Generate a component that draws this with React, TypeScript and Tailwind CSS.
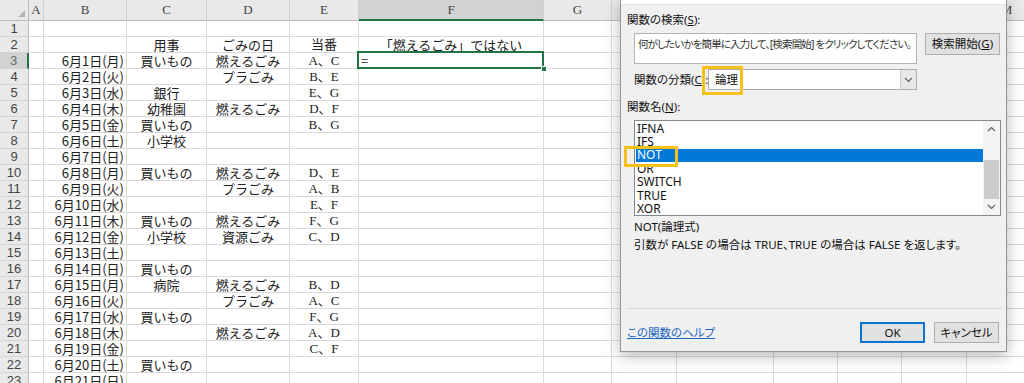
import React from 'react';

type Col = { key: string; w: string };

const COLS: Col[] = [
  { key: 'A', w: 'w-[15px]' },
  { key: 'B', w: 'w-[83px]' },
  { key: 'C', w: 'w-[80px]' },
  { key: 'D', w: 'w-[83px]' },
  { key: 'E', w: 'w-[69px]' },
  { key: 'F', w: 'w-[185px]' },
  { key: 'G', w: 'w-[68px]' },
  { key: 'H', w: 'w-[65px]' },
  { key: 'I', w: 'w-[97px]' },
  { key: 'J', w: 'w-[64px]' },
  { key: 'K', w: 'w-[64px]' },
  { key: 'L', w: 'w-[65px]' },
  { key: 'M', w: 'w-[80px]' },
];

// rows 3.. : B, C, D, E
const SCHEDULE: [string, string, string, string][] = [
  ['6月1日(月)', '買いもの', '燃えるごみ', 'A、C'],
  ['6月2日(火)', '', 'プラごみ', 'B、E'],
  ['6月3日(水)', '銀行', '', 'E、G'],
  ['6月4日(木)', '幼稚園', '燃えるごみ', 'D、F'],
  ['6月5日(金)', '買いもの', '', 'B、G'],
  ['6月6日(土)', '小学校', '', ''],
  ['6月7日(日)', '', '', ''],
  ['6月8日(月)', '買いもの', '燃えるごみ', 'D、E'],
  ['6月9日(火)', '', 'プラごみ', 'A、B'],
  ['6月10日(水)', '', '', 'E、F'],
  ['6月11日(木)', '買いもの', '燃えるごみ', 'F、G'],
  ['6月12日(金)', '小学校', '資源ごみ', 'C、D'],
  ['6月13日(土)', '', '', ''],
  ['6月14日(日)', '買いもの', '', ''],
  ['6月15日(月)', '病院', '燃えるごみ', 'B、D'],
  ['6月16日(火)', '', 'プラごみ', 'A、C'],
  ['6月17日(水)', '買いもの', '', 'F、G'],
  ['6月18日(木)', '', '燃えるごみ', 'A、D'],
  ['6月19日(金)', '', '', 'C、F'],
  ['6月20日(土)', '買いもの', '', ''],
  ['6月21日(日)', '', '', ''],
];

const FUNCS = ['IFNA', 'IFS', 'NOT', 'OR', 'SWITCH', 'TRUE', 'XOR'];

const jp = "font-['Noto_Sans_CJK_JP',sans-serif]";
const ui = "font-['Noto_Sans','Noto_Sans_CJK_JP',sans-serif] [font-feature-settings:'palt']";

function rowCells(n: number): Record<string, React.ReactNode> {
  if (n === 2) return { C: '用事', D: 'ごみの日', E: '当番', F: '「燃えるごみ」ではない' };
  if (n >= 3) {
    const r = SCHEDULE[n - 3];
    const out: Record<string, React.ReactNode> = { B: r[0], C: r[1], D: r[2], E: r[3] };
    if (n === 3) out.F = '=';
    return out;
  }
  return {};
}

function HeaderRow() {
  return (
    <div className="flex h-[21px] shrink-0">
      <div className="relative w-[29px] shrink-0 border-b border-r border-[#bdbdbd] bg-[#e9e9e9]">
        <div className="absolute bottom-[3px] right-[3px] h-0 w-0 border-b-[7px] border-l-[7px] border-b-[#b5b5b5] border-l-transparent" />
      </div>
      {COLS.map((c) => {
        const active = c.key === 'F';
        return (
          <div
            key={c.key}
            className={`${c.w} shrink-0 flex items-center justify-center border-r border-[#d0d0d0] font-['Liberation_Serif',serif] text-[13px] text-[#444] ${
              active ? 'bg-[#d2d2d2] border-b-2 border-b-[#217346]' : 'bg-[#e9e9e9] border-b border-b-[#bdbdbd]'
            }`}
          >
            {c.key}
          </div>
        );
      })}
    </div>
  );
}

function SheetRow({ n }: { n: number }) {
  const cells = rowCells(n);
  const active = n === 3;
  return (
    <div className="flex h-[16px] shrink-0">
      <div
        className={`w-[29px] shrink-0 flex items-center justify-center border-b border-[#d5d5d5] font-['Liberation_Sans',sans-serif] text-[13px] leading-none ${
          active ? 'bg-[#d2d2d2] text-[#5b6f63] border-r-2 border-r-[#217346]' : 'bg-[#e9e9e9] text-[#444] border-r border-r-[#bdbdbd]'
        }`}
      >
        {n}
      </div>
      {COLS.map((c) => {
        const v = cells[c.key];
        const align =
          c.key === 'B' ? 'justify-end pr-[2px]' : c.key === 'F' && n === 3 ? 'justify-start pl-[2px]' : 'justify-center';
        const face = c.key === 'E' ? "font-['Liberation_Serif','Noto_Sans_CJK_JP',serif]" : jp;
        return (
          <div
            key={c.key}
            className={`${c.w} relative shrink-0 flex items-center whitespace-nowrap border-b border-r border-[#dadada] bg-white text-[13px] leading-none text-[#222] ${face} ${align}`}
          >
            {v}
            {c.key === 'F' && n === 3 && (
              <>
                <div className="absolute -left-[2px] -top-[2px] -right-[1px] -bottom-[1px] z-10 border-2 border-[#217346]" />
                <div className="absolute -right-[4px] -bottom-[4px] z-20 h-[6px] w-[6px] border border-white bg-[#217346]" />
              </>
            )}
          </div>
        );
      })}
    </div>
  );
}

function Chevron({ up }: { up?: boolean }) {
  return (
    <svg width="9" height="6" viewBox="0 0 9 6" className="block">
      <polyline
        points={up ? '1,5 4.5,1.5 8,5' : '1,1 4.5,4.5 8,1'}
        fill="none"
        stroke="#606060"
        strokeWidth="1.2"
      />
    </svg>
  );
}

function FunctionDialog() {
  return (
    <div
      className={`absolute left-[620px] top-0 z-30 h-[352px] w-[387px] border-x border-b border-[#959595] bg-[#f0f0f0] text-[11.5px] text-[#111] shadow-[0_4px_14px_rgba(0,0,0,0.28)] ${ui}`}
    >
      <div className="h-[5px] border-b border-[#e2e2e2] bg-white" />

      <div className="ml-[6px] mt-[8px] h-[14px] leading-[14px]">
        関数の検索(<span className="underline">S</span>):
      </div>

      <div className="mt-[6px] flex">
        <div className="ml-[13px] h-[31px] w-[283px] overflow-hidden border border-[#b4b4b4] bg-white px-[3px] pt-[2px] text-[10.5px] leading-[16px] tracking-[-0.85px] text-[#333] whitespace-nowrap">
          何がしたいかを簡単に入力して、[検索開始] をクリックしてください。
        </div>
        <div className="ml-[8px] flex h-[22px] w-[75px] items-center justify-center border border-[#adadad] bg-[#e1e1e1]">
          検索開始(<span className="underline">G</span>)
        </div>
      </div>

      <div className="mt-[5px] flex items-center">
        <div className="ml-[13px] w-[74px] whitespace-nowrap leading-[14px]">
          関数の分類(<span className="underline">C</span>):
        </div>
        <div className="flex h-[21px] w-[209px] items-stretch border border-[#acacac] bg-white">
          <div className="flex flex-1 items-center pl-[6px]">論理</div>
          <div className="flex w-[16px] items-center justify-center border-l border-[#cfcfcf] bg-[#e8e8e8]">
            <Chevron />
          </div>
        </div>
      </div>

      <div className="ml-[6px] mt-[10px] h-[14px] leading-[14px]">
        関数名(<span className="underline">N</span>):
      </div>

      <div className="ml-[13px] mt-[6px] flex h-[96px] w-[367px] border border-[#828790] bg-white">
        <div className="flex-1 pt-[1px]">
          {FUNCS.map((f) => (
            <div
              key={f}
              className={`ml-[1px] flex h-[13.4px] items-center pl-[1px] text-[12px] leading-none ${
                f === 'NOT' ? 'bg-[#0078d7] text-white' : 'text-[#111]'
              }`}
            >
              {f}
            </div>
          ))}
        </div>
        <div className="flex w-[17px] flex-col items-center bg-[#f3f3f3]">
          <div className="flex h-[17px] w-full items-center justify-center">
            <Chevron up />
          </div>
          <div className="mt-[22px] h-[40px] w-[15px] bg-[#cdcdcd]" />
          <div className="flex-1" />
          <div className="flex h-[16px] w-full items-center justify-center">
            <Chevron />
          </div>
        </div>
      </div>

      <div className="ml-[13px] mt-[4px] h-[14px] leading-[14px]">NOT(論理式)</div>
      <div className="ml-[13px] mt-[4px] h-[14px] whitespace-nowrap leading-[14px]">
        引数が FALSE の場合は TRUE、TRUE の場合は FALSE を返します。
      </div>

      <div className="ml-[6px] mt-[56px] w-[374px] border-t border-[#d9d9d9]" />

      <div className="mt-[13px] flex items-center">
        <div className="ml-[6px] text-[#1a66c2] underline">この関数のヘルプ</div>
        <div className="flex-1" />
        <div className="flex h-[21px] w-[65px] items-center justify-center border-2 border-[#0a74d0] bg-[#e1e1e1]">OK</div>
        <div className="ml-[9px] mr-[7px] flex h-[21px] w-[65px] items-center justify-center border border-[#adadad] bg-[#e1e1e1]">
          キャンセル
        </div>
      </div>

      {/* yellow callouts */}
      <div className="absolute left-[81px] top-[66px] h-[29px] w-[41px] border-[3px] border-[#f8c11a]" />
      <div className="absolute left-[3px] top-[146px] h-[21px] w-[54px] border-[3px] border-[#f8c11a]" />
    </div>
  );
}

export default function App() {
  const rows = Array.from({ length: 23 }, (_, i) => i + 1);
  return (
    <div className="relative h-[383px] w-[1024px] overflow-hidden bg-white">
      <div className="flex flex-col">
        <HeaderRow />
        {rows.map((n) => (
          <SheetRow key={n} n={n} />
        ))}
      </div>
      <FunctionDialog />
    </div>
  );
}
